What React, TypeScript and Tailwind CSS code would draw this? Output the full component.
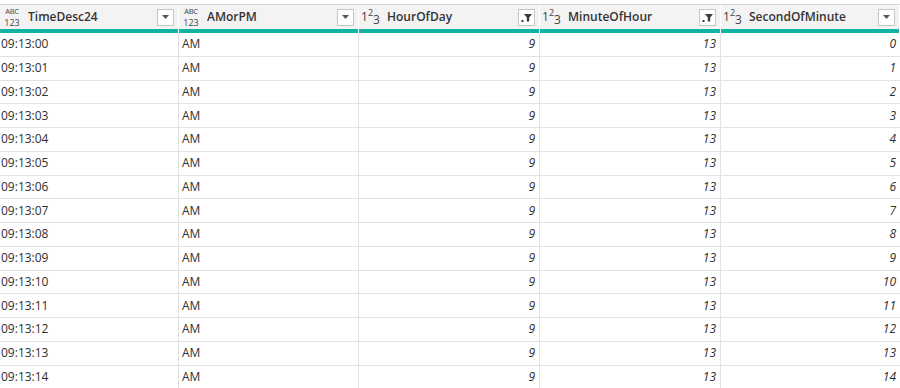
import React from 'react'

type ColType = 'text' | 'number'

interface Column {
  name: string
  type: ColType
  filtered: boolean
}

const COLUMNS: Column[] = [
  { name: 'TimeDesc24', type: 'text', filtered: false },
  { name: 'AMorPM', type: 'text', filtered: false },
  { name: 'HourOfDay', type: 'number', filtered: true },
  { name: 'MinuteOfHour', type: 'number', filtered: true },
  { name: 'SecondOfMinute', type: 'number', filtered: false },
]

const ROWS = Array.from({ length: 15 }, (_, i) => ({
  time: `09:13:${String(i).padStart(2, '0')}`,
  ampm: 'AM',
  hour: 9,
  minute: 13,
  second: i,
}))

function AnyTypeIcon() {
  return (
    <span className="flex w-[20px] flex-col items-center gap-[3px] text-[#444]">
      <span className="text-[7.5px] leading-[8px] tracking-[-0.2px]">ABC</span>
      <span className="text-[9px] leading-[10px]">123</span>
    </span>
  )
}

function NumberIcon() {
  return (
    <span className="flex w-[22px] items-start text-[12px] leading-none text-[#444]">
      <span className="mt-[2px]">1</span>
      <span className="mt-[-1px] text-[9px]">2</span>
      <span className="mt-[5px]">3</span>
    </span>
  )
}

function DropButton({ filtered }: { filtered: boolean }) {
  return (
    <span className="flex h-[17px] w-[17px] items-center justify-center border border-[#c6c6c6] bg-white">
      {filtered ? (
        <svg width="11" height="9" viewBox="0 0 11 9">
          <path d="M3 1h8L8.2 4.5V8.5H5.8V4.5z" fill="#3b3b3b" />
          <rect x="0.5" y="7" width="2" height="2" fill="#3b3b3b" />
        </svg>
      ) : (
        <svg width="7" height="4" viewBox="0 0 7 4">
          <path d="M0 0h7L3.5 4z" fill="#555" />
        </svg>
      )}
    </span>
  )
}

export default function App() {
  return (
    <div className="h-[388px] w-[900px] overflow-hidden bg-white pt-[4px] font-['Open_Sans',sans-serif] text-[12px] text-[#2f2f2f]">
      <div className="grid grid-cols-[179px_180px_181px_181px_1fr] border-t border-[#d7d7d7]">
        {COLUMNS.map((col) => (
          <div key={col.name} className="flex flex-col border-r border-white bg-[#f3f3f3]">
            <div className="flex h-[24px] items-center pl-[2px] pr-[4px]">
              <span className="flex w-[26px] shrink-0 justify-start">
                {col.type === 'text' ? <AnyTypeIcon /> : <NumberIcon />}
              </span>
              <span className="flex-1 truncate text-[12px] font-semibold text-[#333]">{col.name}</span>
              <DropButton filtered={col.filtered} />
            </div>
            <div className="h-[4px] bg-[#13b3a4]" />
          </div>
        ))}
      </div>
      {ROWS.map((row) => (
        <div
          key={row.time}
          className="grid h-[23.75px] grid-cols-[179px_180px_181px_181px_1fr] border-b border-[#e2e2e2]"
        >
          <div className="flex items-center border-r border-[#e2e2e2] pl-[1px]">{row.time}</div>
          <div className="flex items-center border-r border-[#e2e2e2] pl-[3px]">{row.ampm}</div>
          <div className="flex items-center justify-end border-r border-[#e2e2e2] pr-[4px] italic">
            {row.hour}
          </div>
          <div className="flex items-center justify-end border-r border-[#e2e2e2] pr-[4px] italic">
            {row.minute}
          </div>
          <div className="flex items-center justify-end pr-[4px] italic">{row.second}</div>
        </div>
      ))}
    </div>
  )
}
